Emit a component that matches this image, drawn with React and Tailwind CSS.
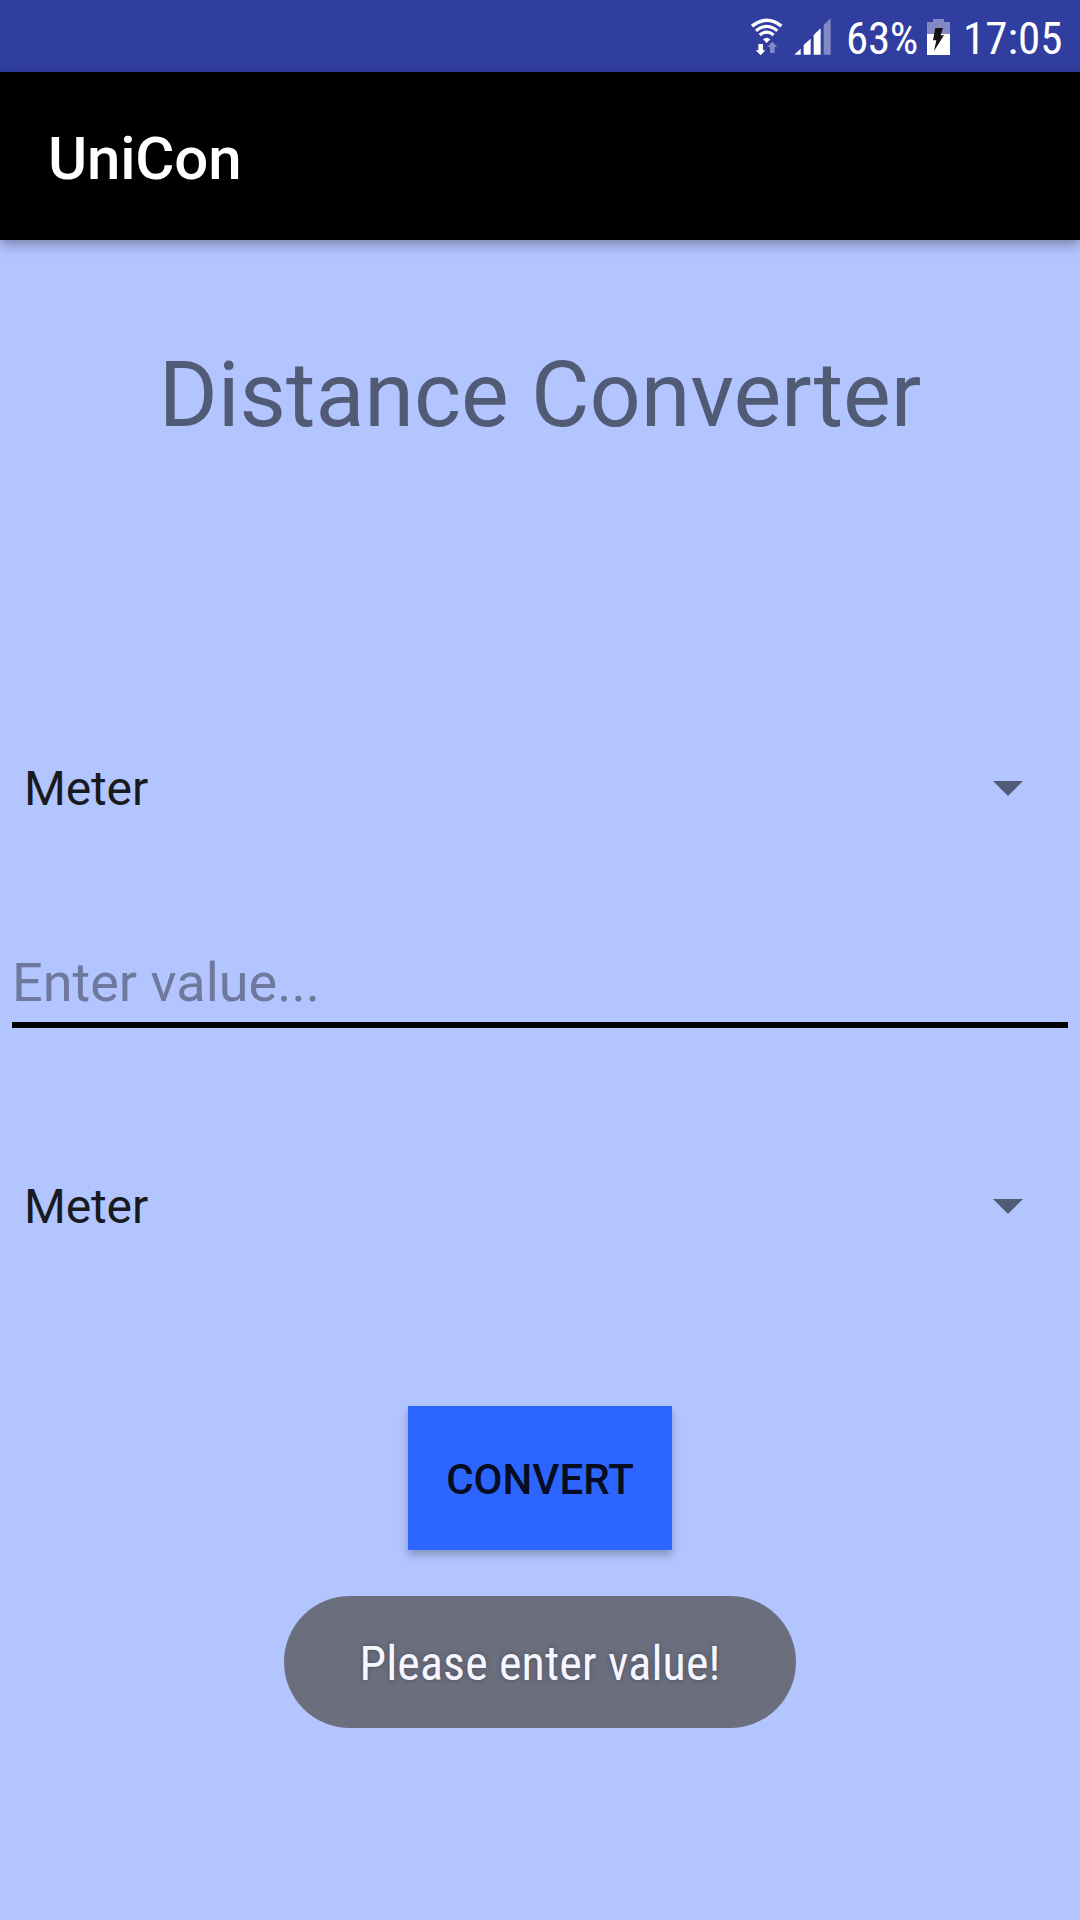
function WifiIcon() {
  return (
    <svg className="block w-[33px] h-[39px]" viewBox="30 51 99 117" fill="none">
      <g stroke="#fff">
        <path d="M36 78.5Q80 43 124 78.5" strokeWidth="10.5" />
        <path d="M48 92Q80 66 112 92" strokeWidth="9.5" />
        <path d="M59 105Q80 88 101 105" strokeWidth="9" />
      </g>
      <path d="M69 118Q80 109 91 118L80 129Z" fill="#fff" />
      <path d="M55 132H69V151H76L62 166L47 151H55Z" fill="#fff" />
      <path d="M97 125L112 141H104V159H90V141H82Z" fill="#8289c5" />
    </svg>
  );
}

function SignalIcon() {
  return (
    <svg className="block w-[37px] h-[37px]" viewBox="163 55 111 111">
      <path d="M164 165L183 147V165Z" fill="#fff" />
      <path d="M192 165V136L213 117V165Z" fill="#fff" />
      <path d="M222 165V106L243 86V165Z" fill="#fff" />
      <path d="M252 165V76L273 56V165Z" fill="#8289c5" />
    </svg>
  );
}

function BatteryIcon() {
  return (
    <svg className="block w-6 h-9" viewBox="561 57 72 108">
      <path d="M561 66H579V57H612V66H630V103H561Z" fill="#8289c5" />
      <rect x="561" y="102" width="69" height="63" fill="#fff" />
      <path d="M586 84H609L602 106H612L582 153L589 121H579Z" fill="#141414" />
    </svg>
  );
}

function Spinner({ label }) {
  return (
    <div className="flex h-[72px] items-center justify-between pl-6 pr-[57px]">
      <span className="text-[48px] leading-[72px] tracking-[-0.15px] text-[#181a20]">{label}</span>
      <svg className="mb-[2px] block w-[30px] h-[15px]" viewBox="0 0 30 15">
        <path d="M0 0H30L15 15Z" fill="#525b75" />
      </svg>
    </div>
  );
}

export default function App() {
  return (
    <div className="flex flex-col w-[1080px] h-[1920px] overflow-hidden bg-[#b3c5ff] font-['Roboto',sans-serif]">
      <header className="flex h-[72px] shrink-0 items-start bg-[#303e9f] pl-[750px] text-white">
        <div className="pt-[17px]"><WifiIcon /></div>
        <div className="pt-[18px] ml-[11px]"><SignalIcon /></div>
        <div className="ml-[15px] w-[74px] pt-[3px] text-[45px] leading-[72px] tracking-[-0.3px] whitespace-nowrap font-stretch-75%">63%</div>
        <div className="pt-[19px] ml-[7px]"><BatteryIcon /></div>
        <div className="ml-[12px] pt-[3px] text-[45px] leading-[72px] whitespace-nowrap font-stretch-75%">17:05</div>
      </header>
      <div className="relative flex h-[168px] shrink-0 items-center bg-black pl-12 pt-[5px] shadow-[0_4px_12px_rgba(0,0,0,0.35)]">
        <h1 className="text-[60px] leading-[72px] font-medium tracking-[-0.2px] text-white">UniCon</h1>
      </div>
      <main className="flex flex-col">
        <h2 className="mt-[96px] text-center text-[90px] leading-[120px] tracking-[-0.05px] text-[#525b75]">Distance Converter</h2>
        <div className="mt-[297px]"><Spinner label="Meter" /></div>
        <div className="mx-3 mt-[122px] border-b-[6px] border-black">
          <div className="h-[75px] text-[54px] leading-[72px] text-[#6f799e]">Enter value...</div>
        </div>
        <div className="mt-[143px]"><Spinner label="Meter" /></div>
        <button className="mt-[163px] h-36 w-[264px] self-center bg-[#2c65ff] pt-[3px] text-[42px] leading-[60px] font-medium text-[#060d22] shadow-[0_5px_8px_rgba(0,0,0,0.25)]">CONVERT</button>
        <div className="mt-[46px] flex h-[132px] w-[512px] items-center justify-center self-center rounded-full bg-[#6b6e7d] pt-[3px] text-[48px] tracking-[0.15px] text-[#f5f6ff] font-stretch-75% [text-shadow:0_0_5px_rgba(0,0,0,0.3)]">Please enter value!</div>
      </main>
    </div>
  );
}
